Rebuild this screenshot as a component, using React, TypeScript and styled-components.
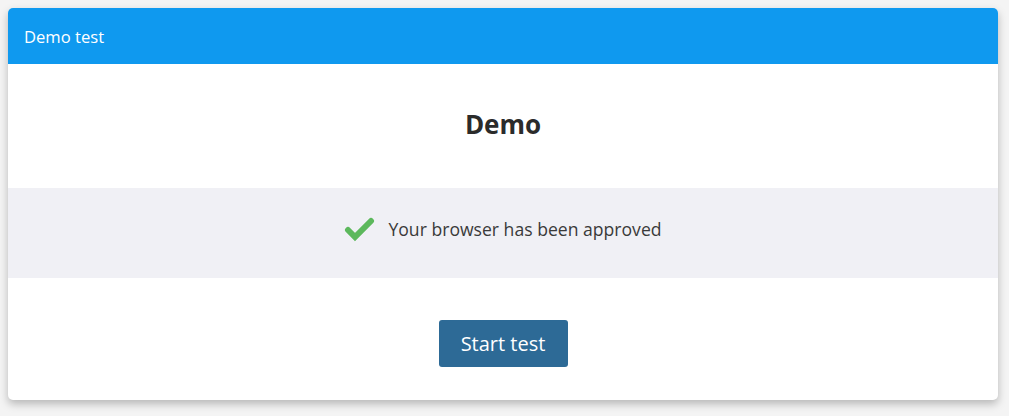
import styled, { createGlobalStyle } from 'styled-components';

const GlobalStyle = createGlobalStyle`
    body {
        margin: 0;
        background: #f4f4f4;
        font-family: 'Open Sans', 'Noto Sans', sans-serif;
        color: #333;
    }
`;

export default function App() {
    return (
        <>
            <GlobalStyle />
            <Page>
                <Card>
                    <CardHeader>Demo test</CardHeader>
                    <TitleSection>
                        <Title>Demo</Title>
                    </TitleSection>
                    <StatusBand>
                        <CheckIcon viewBox="0 0 32 26">
                            <polyline
                                points="4,14 11,21 27,5"
                                fill="none"
                                stroke="#5cb85c"
                                strokeWidth="6"
                                strokeLinecap="round"
                                strokeLinejoin="miter"
                            />
                        </CheckIcon>
                        <span>Your browser has been approved</span>
                    </StatusBand>
                    <ActionSection>
                        <StartButton>Start test</StartButton>
                    </ActionSection>
                </Card>
            </Page>
        </>
    );
}

const Page = styled.div`
    padding: 8px 11px 16px 8px;
`;

const Card = styled.div`
    background: #fff;
    border-radius: 5px;
    overflow: hidden;
    box-shadow: 0 4px 8px rgba(0, 0, 0, 0.25);
`;

const CardHeader = styled.div`
    height: 56px;
    display: flex;
    align-items: center;
    padding: 0 16px;
    background: #0f99ef;
    color: #fff;
    font-size: 16.6px;
`;

const TitleSection = styled.div`
    height: 124px;
    box-sizing: border-box;
    padding-bottom: 4px;
    display: flex;
    align-items: center;
    justify-content: center;
`;

const Title = styled.h1`
    margin: 0;
    font-size: 26px;
    font-weight: 700;
    color: #2b2b2b;
`;

const StatusBand = styled.div`
    height: 90px;
    box-sizing: border-box;
    padding-bottom: 8px;
    display: flex;
    align-items: center;
    justify-content: center;
    gap: 12px;
    background: #f0f0f5;
    font-size: 17.6px;
    color: #3a3a3a;
`;

const CheckIcon = styled.svg`
    width: 32px;
    height: 26px;
`;

const ActionSection = styled.div`
    height: 122px;
    box-sizing: border-box;
    padding-top: 8px;
    display: flex;
    align-items: center;
    justify-content: center;
`;

const StartButton = styled.button`
    width: 129px;
    height: 47px;
    border: none;
    border-radius: 3px;
    background: #2d6a96;
    color: #fff;
    font-family: inherit;
    font-size: 20px;
    cursor: pointer;
`;
